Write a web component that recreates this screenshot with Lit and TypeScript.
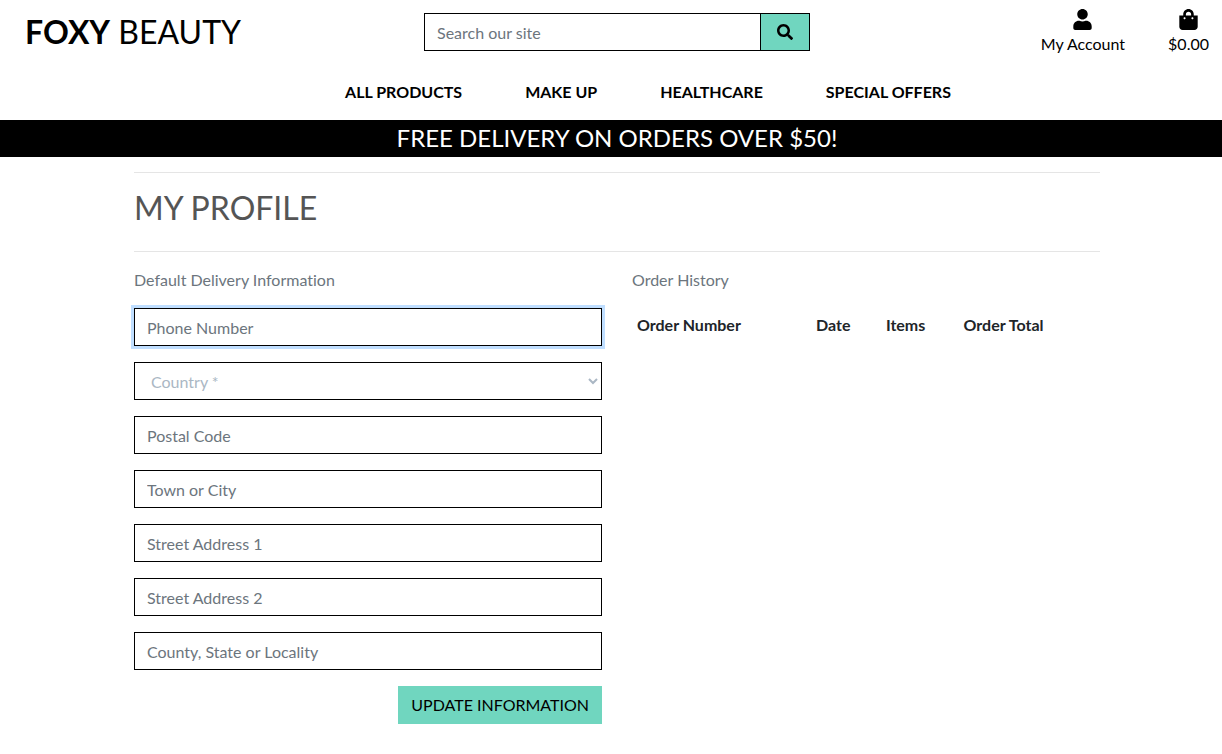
import { LitElement, html, css } from "lit";
import { customElement } from "lit/decorators.js";

const NAV = ["All Products", "Make Up", "Healthcare", "Special Offers"];
const COLUMNS = ["Order Number", "Date", "Items", "Order Total"];
const ADDRESS_FIELDS = ["Postal Code", "Town or City", "Street Address 1", "Street Address 2", "County, State or Locality"];

@customElement("app-root")
export class AppRoot extends LitElement {
  static styles = css`
    :host {
      display: block;
      min-height: 100vh;
      background: #fff;
      color: #000;
      font: 400 16px/24px Lato, "Liberation Sans", sans-serif;
      font-variant-ligatures: no-common-ligatures;
    }
    *, *::before, *::after { box-sizing: border-box; }
    a { color: inherit; text-decoration: none; }
    .top {
      display: grid;
      grid-template-columns: 1fr 386px 1fr;
      gap: 16px;
      padding: 7px 13px 0 25px;
      align-items: center;
    }
    .brand { font-size: 32px; line-height: 50px; }
    .brand strong { font-weight: 700; }
    .search { display: flex; }
    input, select {
      display: block;
      width: 100%;
      height: 38px;
      margin: 0;
      padding: 6px 12px;
      border: 1px solid #000;
      border-radius: 0;
      background: #fff;
      font: inherit;
      color: #495057;
      outline: none;
    }
    input::placeholder { color: #6c757d; opacity: 1; }
    button { font: inherit; color: #000; background: #70d6bf; border: 1px solid #70d6bf; cursor: pointer; }
    .go {
      flex: none;
      width: 49px;
      border: 1px solid #000;
      border-left: 0;
      padding: 0;
      display: grid;
      place-items: center;
    }
    .links { display: flex; justify-content: flex-end; gap: 43px; }
    .link { display: flex; flex-direction: column; align-items: center; gap: 2px; }
    svg { display: block; fill: currentColor; }
    .nav {
      display: flex;
      justify-content: center;
      gap: 63px;
      padding: 23px 0 16px 74px;
      font-weight: 700;
      text-transform: uppercase;
    }
    .banner {
      margin: 0;
      padding: 3px 0 4px 12px;
      background: #000;
      color: #fff;
      text-align: center;
      font-size: 24px;
      line-height: 30px;
      font-weight: 400;
      text-transform: uppercase;
    }
    main { padding: 15px 122px 30px 134px; }
    h1 {
      margin: 0;
      padding: 15px 0 23px;
      border: solid #e5e5e5;
      border-width: 1px 0;
      font-size: 32px;
      line-height: 40px;
      font-weight: 400;
      color: #555;
    }
    .cols { display: grid; grid-template-columns: 1fr 1fr; gap: 30px; padding-top: 16px; }
    h2 { margin: 0 0 16px; font-size: 16px; font-weight: 400; color: #6c757d; }
    form.profile { display: grid; gap: 16px; }
    .phone { box-shadow: 0 0 0 3px #bfdeff; }
    select { color: #aab7c4; }
    .update { justify-self: end; height: 38px; padding: 0 12px; text-transform: uppercase; }
    table { width: 100%; border-collapse: collapse; color: #212529; }
    th { padding: 5px; text-align: left; font-weight: 700; }
  `;

  render() {
    return html`
      <header>
        <div class="top">
          <a class="brand" href="#"><strong>FOXY</strong> BEAUTY</a>
          <form class="search" role="search">
            <input type="text" aria-label="Search our site" placeholder="Search our site" />
            <button class="go" type="button" aria-label="Search">
              <svg width="16" height="16" viewBox="0 0 512 512"><path d="M505 442.700L405.300 343c-4.500-4.500-10.600-7-17-7H372c27.600-35.300 44-79.700 44-128C416 93.100 322.900 0 208 0S0 93.100 0 208s93.100 208 208 208c48.300 0 92.700-16.400 128-44v16.300c0 6.400 2.500 12.500 7 17l99.700 99.700c9.400 9.400 24.600 9.400 33.900 0l28.300-28.300c9.400-9.400 9.400-24.600.1-34zM208 336c-70.700 0-128-57.200-128-128 0-70.700 57.200-128 128-128 70.700 0 128 57.200 128 128 0 70.700-57.200 128-128 128z"/></svg>
            </button>
          </form>
          <div class="links">
            <a class="link" href="#">
              <svg width="19" height="21" viewBox="0 0 448 512"><path d="M224 256c70.700 0 128-57.300 128-128S294.700 0 224 0 96 57.300 96 128s57.300 128 128 128zm89.600 32h-16.700c-22.200 10.200-46.900 16-72.900 16s-50.600-5.800-72.900-16h-16.700C60.200 288 0 348.200 0 422.400V464c0 26.500 21.500 48 48 48h352c26.500 0 48-21.500 48-48v-41.600c0-74.200-60.200-134.400-134.400-134.400z"/></svg>
              <span>My Account</span>
            </a>
            <a class="link" href="#">
              <svg width="19" height="21" viewBox="0 0 448 512"><path d="M352 160v-32C352 57.420 294.579 0 224 0 153.420 0 96 57.420 96 128v32H0v272c0 44.183 35.817 80 80 80h288c44.183 0 80-35.817 80-80V160h-96zm-192-32c0-35.290 28.710-64 64-64s64 28.710 64 64v32H160v-32zm160 120c-13.255 0-24-10.745-24-24s10.745-24 24-24 24 10.745 24 24-10.745 24-24 24zm-192 0c-13.255 0-24-10.745-24-24s10.745-24 24-24 24 10.745 24 24-10.745 24-24 24z"/></svg>
              <span>$0.00</span>
            </a>
          </div>
        </div>
        <nav class="nav">${NAV.map((n) => html`<a href="#">${n}</a>`)}</nav>
        <p class="banner">Free delivery on orders over $50!</p>
      </header>
      <main>
        <h1>MY PROFILE</h1>
        <div class="cols">
          <section>
            <h2>Default Delivery Information</h2>
            <form class="profile">
              <input class="phone" type="text" aria-label="Phone Number" placeholder="Phone Number" />
              <select aria-label="Country"><option>Country *</option></select>
              ${ADDRESS_FIELDS.map((f) => html`<input type="text" aria-label=${f} placeholder=${f} />`)}
              <button class="update" type="button">Update Information</button>
            </form>
          </section>
          <section>
            <h2>Order History</h2>
            <table>
              <thead><tr>${COLUMNS.map((c) => html`<th scope="col">${c}</th>`)}</tr></thead>
            </table>
          </section>
        </div>
      </main>
    `;
  }
}
